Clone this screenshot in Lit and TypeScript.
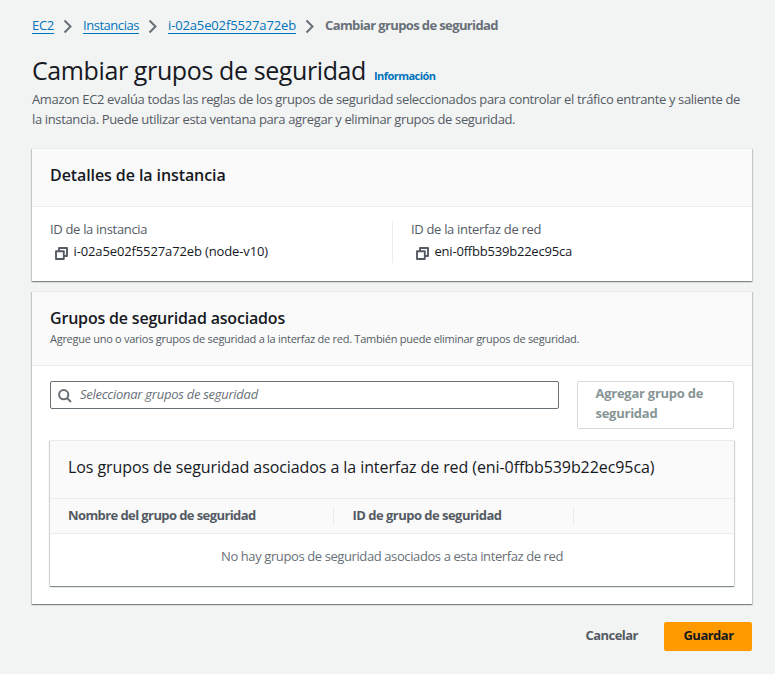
import { LitElement, html, css } from "lit";
import { customElement } from "lit/decorators.js";

const chevron = html`<svg class="chev" viewBox="0 0 10 15" width="10" height="15"><path d="M1.5 1.5 L7.5 7.5 L1.5 13.5" fill="none" stroke="#687078" stroke-width="2"/></svg>`;
const copy = html`<svg class="copy" viewBox="0 0 13 13" width="13" height="13"><path d="M1 4.2h7.8v7.8h-7.8zM4 4.2V1h8v8h-3.2" fill="none" stroke="#545b64" stroke-width="1.9" stroke-linejoin="round"/></svg>`;

@customElement("app-root")
export class AppRoot extends LitElement {
  static styles = css`
    :host { display: block; box-sizing: border-box; min-height: 674px; padding: 15px 22px 0 32px; background: #f2f3f3; color: #16191f; font: 13px/20px "Open Sans", "Noto Sans", sans-serif; letter-spacing: -0.355px; }
    * { box-sizing: border-box; }
    nav { display: flex; align-items: center; height: 20px; color: #687078; white-space: nowrap; }
    nav a { color: #0073bb; height: 18px; line-height: 18px; border-bottom: 1px solid #0073bb; }
    .l1 { width: 22px; letter-spacing: -0.27px; }
    .l2 { width: 56px; letter-spacing: -0.46px; }
    .l3 { width: 128px; letter-spacing: -0.137px; }
    .here { font-weight: 700; letter-spacing: -0.62px; }
    .chev { flex: none; margin: 3px 10px 0 9px; }
    .title { display: flex; align-items: baseline; margin: 17px 0 0; height: 36px; white-space: nowrap; }
    h1 { margin: 0; width: 342px; font-size: 25px; line-height: 36px; font-weight: 400; letter-spacing: -0.39px; }
    .info { color: #0073bb; font-size: 11px; font-weight: 700; letter-spacing: -0.54px; margin-top: -1px; }
    .desc { margin: 1px 0 0; color: #545b64; white-space: nowrap; }
    .card { width: 720px; background: #fff; border-top: 1px solid #eaeded; box-shadow: 0 1px 1px 0 rgba(0,28,36,.3), 1px 1px 1px 0 rgba(0,28,36,.15), -1px 1px 1px 0 rgba(0,28,36,.15); white-space: nowrap; }
    .head { background: #fafafa; border-bottom: 1px solid #eaeded; padding: 0 18px; }
    h2 { margin: 0; font-size: 16px; line-height: 22px; font-weight: 600; }
    .details { margin-top: 19px; height: 133px; }
    .details .head { height: 58px; padding-top: 15px; }
    .details h2 { letter-spacing: -0.09px; }
    .cols { display: flex; padding: 14px 18px 0; }
    .col { width: 342px; height: 42px; }
    .col + .col { border-left: 1px solid #eaeded; padding-left: 18px; }
    .label { color: #545b64; line-height: 16px; height: 20px; letter-spacing: -0.32px; }
    .val { display: flex; align-items: center; height: 20px; padding-left: 5px; }
    .copy { flex: none; margin: 4px 5.5px 0 0; }
    .v1 { letter-spacing: -0.123px; }
    .v2 { letter-spacing: -0.205px; }
    .groups { margin-top: 10px; height: 313px; }
    .groups > .head { height: 74px; padding-top: 15px; }
    .groups h2 { letter-spacing: -0.19px; }
    .sub { color: #545b64; font-size: 11px; line-height: 20px; letter-spacing: -0.268px; }
    .row { display: flex; justify-content: space-between; align-items: flex-start; padding: 15px 18px 0; }
    .search { display: flex; align-items: center; width: 509px; height: 28px; border: 1px solid #687078; border-radius: 2px; padding: 0 0 2px 7px; color: #687078; font-style: italic; letter-spacing: -0.265px; }
    .search svg { margin: 3px 8px 0 0; flex: none; }
    .add { display: flex; width: 157px; height: 48px; border: 1px solid #d5dbdb; border-radius: 2px; padding: 1px 0 0 17.5px; color: #879596; background: #fff; font: inherit; font-weight: 700; text-align: left; align-items: flex-start; letter-spacing: -0.26px; }
    .inner { width: 684px; height: 146px; margin: 11px 18px 0; }
    .inner .head { height: 58px; padding-top: 15px; font-size: 16px; line-height: 22px; letter-spacing: -0.08px; }
    .ths { display: flex; align-items: center; height: 35px; background: #fafafa; border-bottom: 1px solid #eaeded; color: #545b64; font-weight: 700; }
    .th { height: 18px; line-height: 16px; padding-left: 18px; border-right: 1px solid #eaeded; }
    .t1 { width: 284px; letter-spacing: -0.59px; }
    .t2 { width: 240px; padding-left: 18.5px; letter-spacing: -0.52px; }
    .empty { text-align: center; color: #687078; padding-top: 12px; letter-spacing: -0.397px; }
    .foot { display: flex; justify-content: flex-end; align-items: center; margin-top: 18px; height: 29px; width: 720px; font-weight: 700; letter-spacing: -0.52px; color: #545b64; }
    .foot button { font: inherit; letter-spacing: inherit; border: 0; padding: 0 0 3px; background: none; color: inherit; }
    .foot .save { width: 88px; height: 29px; margin-left: 26px; padding-left: 1px; background: #f90; border-radius: 2px; color: #16191f; }
  `;

  render() {
    return html`
      <nav><a class="l1">EC2</a>${chevron}<a class="l2">Instancias</a>${chevron}<a class="l3">i-02a5e02f5527a72eb</a>${chevron}<span class="here">Cambiar grupos de seguridad</span></nav>
      <div class="title"><h1>Cambiar grupos de seguridad</h1><span class="info">Información</span></div>
      <p class="desc">Amazon EC2 evalúa todas las reglas de los grupos de seguridad seleccionados para controlar el tráfico entrante y saliente de<br>la instancia. Puede utilizar esta ventana para agregar y eliminar grupos de seguridad.</p>
      <section class="card details">
        <div class="head"><h2>Detalles de la instancia</h2></div>
        <div class="cols">
          <div class="col"><div class="label">ID de la instancia</div><div class="val v1">${copy}i-02a5e02f5527a72eb (node-v10)</div></div>
          <div class="col"><div class="label">ID de la interfaz de red</div><div class="val v2">${copy}eni-0ffbb539b22ec95ca</div></div>
        </div>
      </section>
      <section class="card groups">
        <div class="head"><h2>Grupos de seguridad asociados</h2><div class="sub">Agregue uno o varios grupos de seguridad a la interfaz de red. También puede eliminar grupos de seguridad.</div></div>
        <div class="row">
          <div class="search"><svg viewBox="0 0 14 14" width="14" height="14"><circle cx="5.7" cy="5.7" r="4.6" fill="none" stroke="#687078" stroke-width="2"/><path d="M9 9l4 4" stroke="#687078" stroke-width="2"/></svg>Seleccionar grupos de seguridad</div>
          <button class="add"><span>Agregar grupo de<br>seguridad</span></button>
        </div>
        <div class="card inner">
          <div class="head">Los grupos de seguridad asociados a la interfaz de red (eni-0ffbb539b22ec95ca)</div>
          <div class="ths"><div class="th t1">Nombre del grupo de seguridad</div><div class="th t2">ID de grupo de seguridad</div></div>
          <div class="empty">No hay grupos de seguridad asociados a esta interfaz de red</div>
        </div>
      </section>
      <div class="foot"><button>Cancelar</button><button class="save">Guardar</button></div>
    `;
  }
}
